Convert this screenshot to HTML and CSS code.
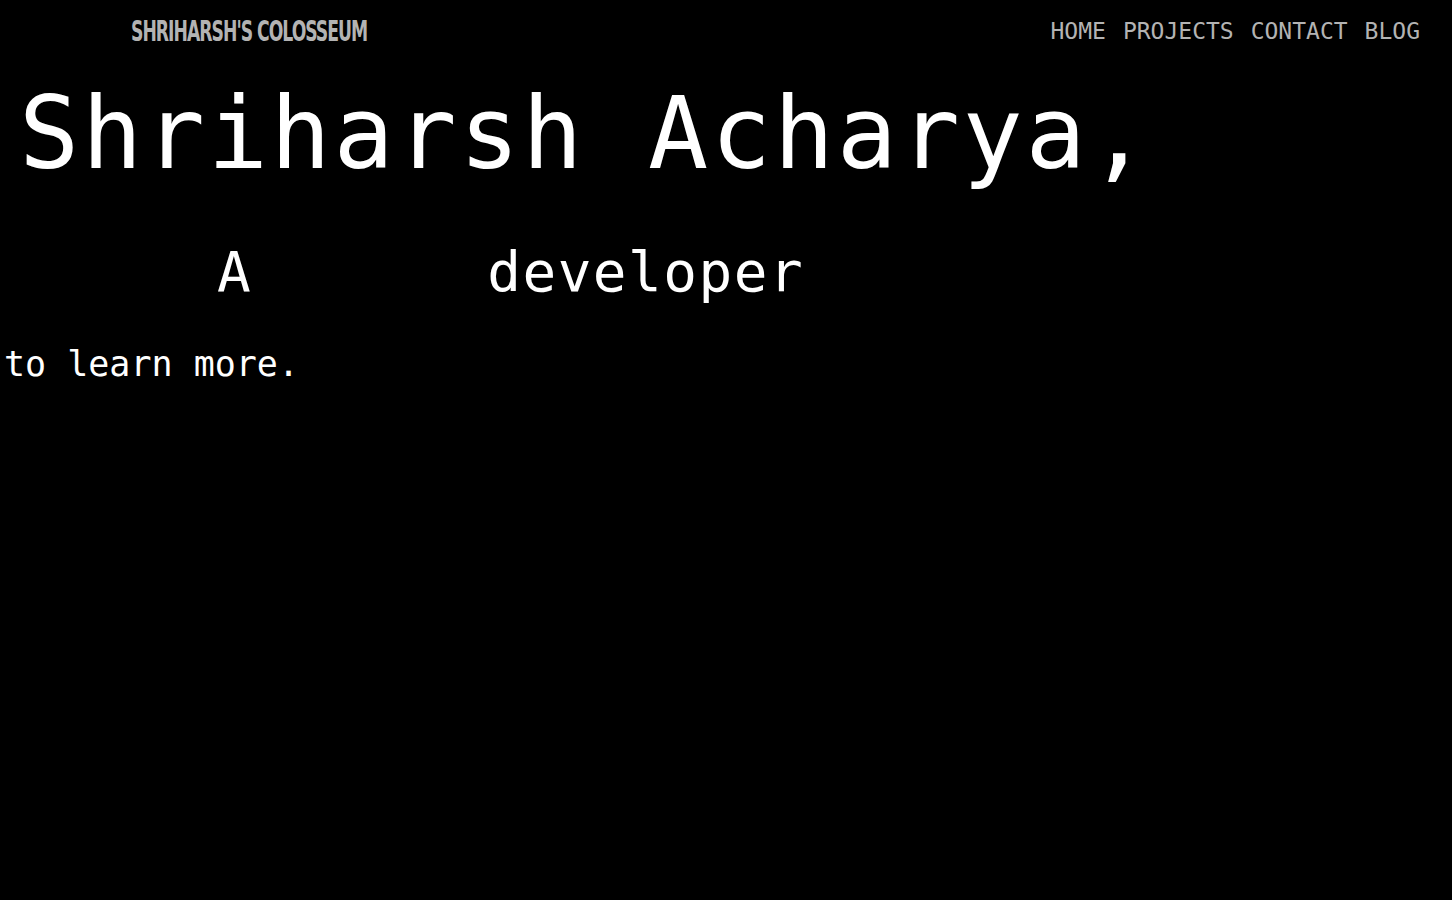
FILE: index.html
```html
<!DOCTYPE html>
<html lang="en">
<head>
<meta charset="utf-8">
<title>Shriharsh's Colosseum</title>
<link rel="stylesheet" href="styles.css">
</head>
<body>
<header class="topbar">
  <a class="brand" href="#">SHRIHARSH'S COLOSSEUM</a>
  <nav class="nav">
    <a href="#">HOME</a>
    <a href="#">PROJECTS</a>
    <a href="#">CONTACT</a>
    <a href="#">BLOG</a>
  </nav>
</header>
<main class="hero">
  <h1 class="name">Shriharsh Acharya,</h1>
  <p class="tagline"><span class="tag-a">A</span><span class="tag-role">developer</span></p>
  <p class="more">to learn more.</p>
</main>
</body>
</html>
```
FILE: styles.css
```css
html, body {
  margin: 0;
  padding: 0;
  background: #000;
  color: #fff;
  height: 100%;
  overflow: hidden;
}
body {
  font-family: "DejaVu Sans Mono", monospace;
}
a {
  text-decoration: none;
  color: inherit;
}
.topbar {
  display: flex;
  justify-content: space-between;
  align-items: center;
  height: 62px;
  padding: 0 32px 0 131px;
}
.brand {
  font-family: "DejaVu Sans Condensed", "Liberation Sans Narrow", sans-serif;
  font-weight: bold;
  font-size: 29px;
  letter-spacing: -1.5px;
  color: #b3b3b3;
  display: inline-block;
  transform: scaleX(0.66);
  transform-origin: left center;
}
.nav {
  display: flex;
  gap: 17px;
  font-size: 23px;
  color: #b3b3b3;
}
.hero {
  padding: 0 0 0 14px;
}
.name {
  margin: 9px 0 0 5px;
  font-size: 100px;
  letter-spacing: 2.7px;
  font-weight: normal;
  line-height: 126px;
  white-space: nowrap;
}
.tagline {
  display: flex;
  margin: 30px 0 0;
  padding-left: 203px;
  font-size: 56px;
  letter-spacing: 1.5px;
  line-height: 90px;
}
.tag-role {
  margin-left: 235px;
}
.more {
  margin: 0 0 0 -10px;
  font-size: 35px;
  line-height: 94px;
}
```
